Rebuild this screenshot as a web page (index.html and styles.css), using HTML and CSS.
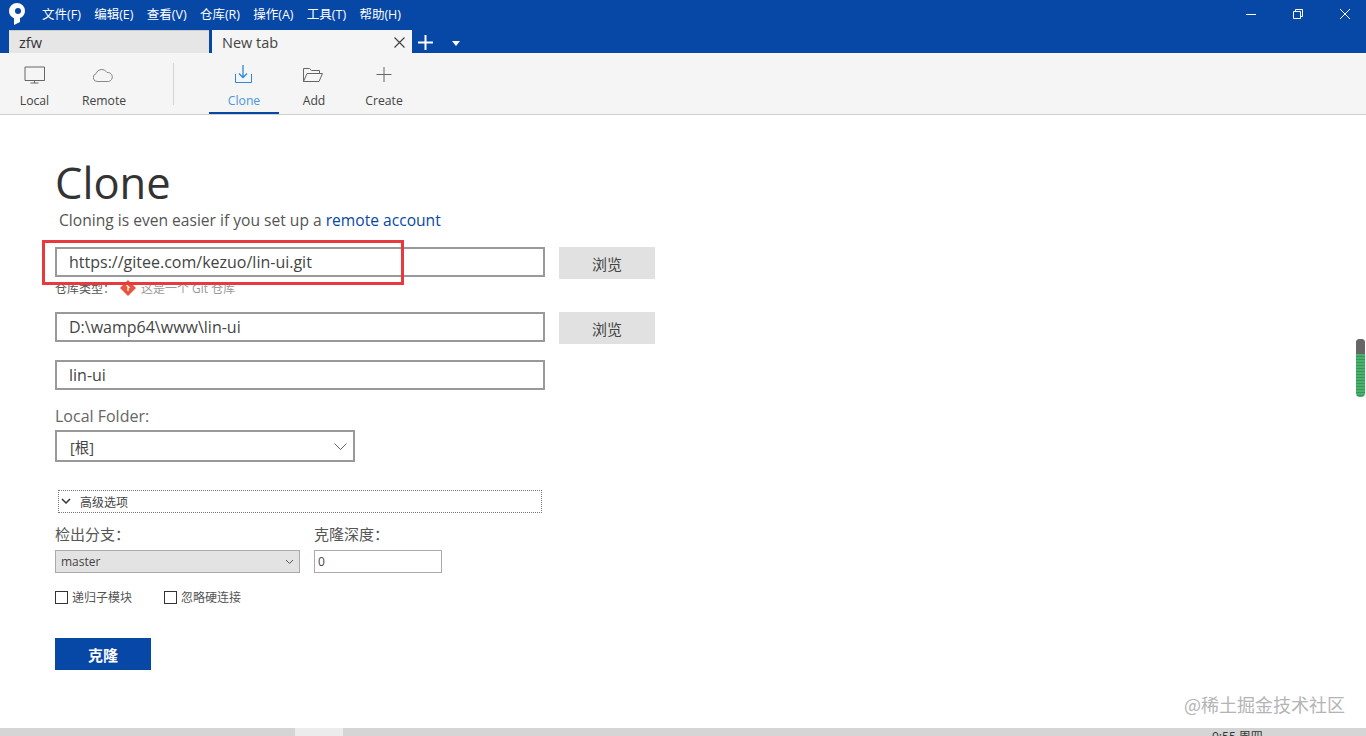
FILE: index.html
```html
<!DOCTYPE html>
<html lang="en">
<head>
  <meta charset="UTF-8" />
  <title>Clone</title>
  <link rel="stylesheet" href="styles.css">
</head>
<body>

<div class="app">
  <!-- Title bar + tabs -->
  <header class="titlebar">
    <div class="menu-row">
      <svg class="logo" width="18" height="24" viewBox="0 0 18 24">
        <path d="M9 1a8 8 0 0 0-8 8c0 3.500 2 6 5 7.200V23l6-3v-3.900c3-1.200 5-3.900 5-7.100a8 8 0 0 0-8-8z" fill="#fff"/>
        <circle cx="10" cy="9" r="3" fill="#0747a6"/>
      </svg>
      <nav class="menu">
        <span>文件(F)</span>
        <span>编辑(E)</span>
        <span>查看(V)</span>
        <span>仓库(R)</span>
        <span>操作(A)</span>
        <span>工具(T)</span>
        <span>帮助(H)</span>
      </nav>
      <div class="win-controls">
        <svg width="12" height="12" viewBox="0 0 12 12"><path d="M1 6.500h10" stroke="#fff" fill="none"/></svg>
        <svg width="12" height="12" viewBox="0 0 12 12"><path d="M1.500 3.500h7v7h-7zM3.500 3.500v-2h7v7h-2" stroke="#fff" fill="none"/></svg>
        <svg width="12" height="12" viewBox="0 0 12 12"><path d="M1 1l10 10M11 1L1 11" stroke="#fff" fill="none"/></svg>
      </div>
    </div>
    <div class="tab-row">
      <div class="tab tab-inactive">zfw</div>
      <div class="tab tab-active">
        <span>New tab</span>
        <svg width="11" height="11" viewBox="0 0 11 11"><path d="M.5.500l10 10M10.500.500l-10 10" stroke="#444" stroke-width="1.200" fill="none"/></svg>
      </div>
      <svg class="tab-add" width="15" height="15" viewBox="0 0 15 15"><path d="M7.500 0v15M0 7.500h15" stroke="#fff" stroke-width="2" fill="none"/></svg>
      <svg class="tab-more" width="8" height="5" viewBox="0 0 8 5"><path d="M0 0h8L4 5z" fill="#fff"/></svg>
    </div>
  </header>

  <!-- Toolbar -->
  <div class="toolbar">
    <div class="tool tool-first">
      <svg width="22" height="18" viewBox="0.500 0 22 18"><path d="M1.500 1h19.500v13.500H1.500zM11 14.500v2.500M7 17h8" stroke="#666" fill="none"/></svg>
      <span>Local</span>
    </div>
    <div class="tool">
      <svg width="22" height="18" viewBox="2 0 22 18"><path d="M6 15.500a4 4 0 0 1-1-7.800 6 6 0 0 1 11-1.200 4.500 4.500 0 0 1 1.500 9z" stroke="#888" fill="none"/></svg>
      <span>Remote</span>
    </div>
    <div class="tool-sep"></div>
    <div class="tool tool-active">
      <svg width="22" height="20" viewBox="1 0 22 20"><path d="M11 1v12M7 9.500l4 4 4-4" stroke="#2b88d8" stroke-width="1.300" fill="none"/><path d="M3.500 10v8.500h16V10" stroke="#2b88d8" fill="none"/></svg>
      <span>Clone</span>
    </div>
    <div class="tool">
      <svg width="22" height="18" viewBox="1 0 22 18"><path d="M1.500 15.500V2.500h6l2 2h8v3M1.500 15.500l3.500-8h15.500l-3.500 8z" stroke="#666" fill="none"/></svg>
      <span>Add</span>
    </div>
    <div class="tool">
      <svg width="22" height="18" viewBox="0 0 22 18"><path d="M11 1v15M3.500 8.500h15" stroke="#666" fill="none"/></svg>
      <span>Create</span>
    </div>
  </div>

  <!-- Clone form -->
  <main class="content">
    <h1>Clone</h1>
    <p class="subtitle">Cloning is even easier if you set up a <a href="#">remote account</a></p>

    <div class="field-row">
      <input class="text-input" type="text" value="https://gitee.com/kezuo/lin-ui.git">
      <button class="browse">浏览</button>
    </div>
    <div class="repo-type">
      <span class="repo-type-label">仓库类型：</span>
      <svg width="16" height="16" viewBox="0 0 16 16"><path d="M8 0l8 8-8 8-8-8z" fill="#e8553a"/><path d="M6.500 5l3 3M8 7v4" stroke="#fff" stroke-width="1.300"/></svg>
      <span class="repo-type-value">这是一个 Git 仓库</span>
    </div>
    <div class="field-row dest-row">
      <input class="text-input" type="text" value="D:\wamp64\www\lin-ui">
      <button class="browse">浏览</button>
    </div>
    <input class="text-input name-input" type="text" value="lin-ui">

    <label class="folder-label">Local Folder:</label>
    <div class="folder-select">
      <span>[根]</span>
      <svg width="13" height="7" viewBox="0 0 13 7"><path d="M.5.500l6 6 6-6" stroke="#666" fill="none"/></svg>
    </div>

    <div class="advanced">
      <svg width="10" height="7" viewBox="0 0 10 7"><path d="M1 1l4 4 4-4" stroke="#333" stroke-width="1.500" fill="none"/></svg>
      <span>高级选项</span>
    </div>

    <div class="options">
      <div class="option-branch">
        <label>检出分支：</label>
        <div class="branch-select">
          <span>master</span>
          <svg width="9" height="6" viewBox="0 0 9 6"><path d="M1 1l3.500 3.500L8 1" stroke="#555" fill="none"/></svg>
        </div>
      </div>
      <div class="option-depth">
        <label>克隆深度：</label>
        <input class="depth-input" type="text" value="0">
      </div>
    </div>

    <div class="checks">
      <label class="check"><span class="box"></span>递归子模块</label>
      <label class="check"><span class="box"></span>忽略硬连接</label>
    </div>

    <button class="clone-btn">克隆</button>
  </main>

  <!-- Bottom strip of the window behind -->
  <div class="taskbar">
    <div class="task-light"></div>
    <span class="task-clock">0:55 周四</span>
  </div>

  <div class="red-mark"></div>
  <div class="side-meter"></div>
  <div class="watermark">@稀土掘金技术社区</div>
</div>

</body>
</html>
```

FILE: styles.css
```css
* {
  box-sizing: border-box;
}

body {
  margin: 0;
  font-family: "Open Sans", "Noto Sans CJK SC", sans-serif;
  color: #444;
  background: #fff;
}

.app {
  position: relative;
  width: 1366px;
  height: 736px;
  overflow: hidden;
  display: flex;
  flex-direction: column;
}

/* title bar */
.titlebar {
  height: 53px;
  background: #0747a6;
  display: flex;
  flex-direction: column;
}

.menu-row {
  height: 30px;
  display: flex;
  align-items: center;
  padding-left: 8px;
}

.logo {
  flex: none;
  margin-top: -3px;
}

.menu {
  display: flex;
  gap: 13.300px;
  margin-left: 16px;
  margin-top: -3px;
  font-size: 12.500px;
  color: #fff;
}

.win-controls {
  margin-left: auto;
  display: flex;
  gap: 35px;
  padding-right: 15px;
  margin-top: -3px;
}

.win-controls svg {
  width: 12px;
}

.tab-row {
  height: 23px;
  display: flex;
  align-items: stretch;
  padding-left: 9px;
}

.tab {
  display: flex;
  align-items: center;
  padding-top: 1px;
  font-size: 14.500px;
}

.tab-inactive {
  width: 200px;
  padding-left: 10px;
  background: #e6e6e6;
  border-top: 1px solid #ccc;
  color: #333;
}

.tab-active {
  width: 200px;
  margin-left: 3px;
  padding-left: 10px;
  padding-right: 7px;
  justify-content: space-between;
  background: #f5f5f5;
  color: #444;
}

.tab-add {
  margin: 5px 0 0 6px;
}

.tab-more {
  margin: 11px 0 0 19px;
}

/* toolbar */
.toolbar {
  height: 62px;
  background: #f5f5f5;
  border-bottom: 1px solid #d0d0d0;
  display: flex;
}

.tool {
  width: 70px;
  height: 61px;
  display: flex;
  flex-direction: column;
  align-items: center;
  justify-content: flex-end;
  gap: 8px;
  padding-bottom: 5px;
  font-size: 12.200px;
  color: #444;
}

.tool-first {
  width: 69px;
}

.tool-active {
  color: #4a97e0;
  border-bottom: 2px solid #0747a6;
  padding-bottom: 3px;
}

.tool-sep {
  width: 1px;
  height: 42px;
  margin: 10px 35px 0 34px;
  background: #d5d5d5;
}

/* form */
.content {
  flex: 1;
  padding: 0 0 0 55px;
  display: flex;
  flex-direction: column;
  align-items: flex-start;
}

h1 {
  margin: 36px 0 0;
  font-size: 43.500px;
  font-weight: 400;
  line-height: 64px;
  color: #333;
}

.subtitle {
  margin: -5px 0 0 4px;
  font-size: 15.600px;
  line-height: 20px;
  color: #555;
}

.subtitle a {
  color: #0747a6;
  text-decoration: none;
}

.field-row {
  display: flex;
  gap: 14px;
  margin-top: 17px;
}

.dest-row {
  margin-top: 16px;
}

.text-input {
  width: 490px;
  height: 30px;
  padding: 0 12px;
  border: 2px solid #999;
  font: 16px "Open Sans", "Noto Sans CJK SC", sans-serif;
  color: #444;
  background: #fff;
}

.browse {
  width: 96px;
  height: 32px;
  border: none;
  background: #e1e1e1;
  font: 15px "Noto Sans CJK SC", sans-serif;
  color: #444;
}

.repo-type {
  display: flex;
  align-items: center;
  height: 16px;
  margin-top: 1px;
  font-size: 12px;
  color: #555;
}

.repo-type-label {
  width: 55px;
  white-space: nowrap;
}

.repo-type svg {
  margin: 0 5px 0 10px;
}

.repo-type-value {
  color: #999;
}

.name-input {
  margin-top: 16px;
}

.folder-label {
  margin-top: 16px;
  font-size: 16px;
  line-height: 20px;
  color: #666;
}

.folder-select {
  width: 300px;
  height: 32px;
  margin-top: 4px;
  padding: 0 6px 0 13px;
  border: 2px solid #999;
  display: flex;
  align-items: center;
  justify-content: space-between;
  font-size: 14.500px;
}

.advanced {
  width: 484px;
  height: 23px;
  margin: 28px 0 0 3px;
  padding-left: 2px;
  border: 1px dotted #777;
  display: flex;
  align-items: center;
  gap: 9px;
  font-size: 12px;
  color: #444;
}

.options {
  display: flex;
  gap: 14px;
  margin-top: 11px;
}

.options label {
  display: block;
  font-size: 15px;
  line-height: 20px;
  color: #555;
}

.branch-select {
  width: 245px;
  height: 23px;
  margin-top: 6px;
  padding: 0 5px;
  background: #e3e3e3;
  border: 1px solid #aaa;
  display: flex;
  align-items: center;
  justify-content: space-between;
  font-size: 12px;
}

.depth-input {
  display: block;
  width: 128px;
  height: 23px;
  margin-top: 6px;
  padding: 0 3px;
  border: 1px solid #aaa;
  font: 12px "Open Sans", sans-serif;
  color: #444;
}

.checks {
  display: flex;
  gap: 32px;
  margin-top: 18px;
}

.check {
  display: flex;
  align-items: center;
  gap: 4px;
  font-size: 12px;
  line-height: 13px;
  color: #555;
}

.box {
  width: 13px;
  height: 13px;
  border: 1px solid #333;
  background: #fff;
}

.clone-btn {
  width: 96px;
  height: 32px;
  margin-top: 34px;
  border: none;
  background: #0747a6;
  color: #fff;
  font: 700 15px "Noto Sans CJK SC", sans-serif;
}

/* bottom strip */
.taskbar {
  position: relative;
  height: 8px;
  flex: none;
  background: #d4d5d4;
  overflow: hidden;
}

.task-light {
  width: 48px;
  height: 8px;
  margin-left: 295px;
  background: #ececec;
}

.task-clock {
  position: absolute;
  left: 1212px;
  top: 2px;
  font-size: 12px;
  line-height: 14px;
  color: #333;
}

/* overlays */
.red-mark {
  position: absolute;
  left: 42px;
  top: 240px;
  width: 362px;
  height: 45px;
  border: 3px solid #e8393f;
}

.side-meter {
  position: absolute;
  left: 1356px;
  top: 339px;
  width: 9px;
  height: 58px;
  border-radius: 4px;
  background: repeating-linear-gradient(#4caf6e 0 2px, #2f9a58 2px 3px);
}

.side-meter::before {
  content: "";
  display: block;
  height: 15px;
  border-radius: 4px 4px 0 0;
  background: #666;
}

.watermark {
  position: absolute;
  right: 21px;
  top: 692px;
  font: 18px "Noto Sans CJK SC", sans-serif;
  line-height: 24px;
  color: #b4b4b4;
}
```
